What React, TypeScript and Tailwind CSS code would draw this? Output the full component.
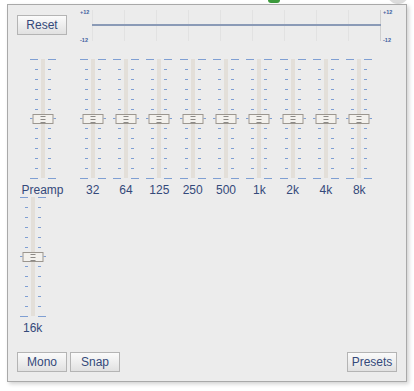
import React from "react"

const bands = ["32", "64", "125", "250", "500", "1k", "2k", "4k", "8k", "16k"]
const font = { fontFamily: '"Liberation Sans", Arial, sans-serif' }

const Button = (props: { label: string; className?: string }) => (
  <button
    className={
      "w-[50px] h-[20px] border border-[#b4b4b4] bg-gradient-to-b from-[#fbfbfb] to-[#e1e1e1] text-[12px] leading-none text-[#34497a] " +
      (props.className ?? "")
    }
  >
    {props.label}
  </button>
)

const Tick = (props: { major: boolean }) =>
  props.major ? (
    <div className="flex justify-center gap-[10px] h-px">
      <div className="w-[8px] h-px bg-[#7f9fd3]" />
      <div className="w-[8px] h-px bg-[#7f9fd3]" />
    </div>
  ) : (
    <div className="flex justify-center gap-[10px] h-px">
      <div className="w-[8px] h-px flex justify-end">
        <div className="w-[3px] h-px bg-[#7f9fd3]" />
      </div>
      <div className="w-[8px] h-px">
        <div className="w-[3px] h-px bg-[#7f9fd3]" />
      </div>
    </div>
  )

const Slider = (props: { label: string; className: string }) => (
  <div className={"flex flex-col items-center h-[138px] " + props.className}>
    <div className="relative w-full h-[120px] flex flex-col justify-between">
      <div className="absolute left-1/2 -translate-x-1/2 top-0 bottom-[1px] w-[4px] bg-[#e3dfd9]" />
      {Array.from({ length: 13 }).map((_, i) => (
        <Tick key={i} major={i % 6 === 0} />
      ))}
      <div className="absolute top-[55px] left-1/2 -translate-x-1/2 w-[21px] h-[10px] border border-[#9b968f] bg-[#f3f1ed] flex flex-col items-center justify-center gap-[2px]">
        <div className="w-[5px] h-px bg-[#8d8a86]" />
        <div className="w-[5px] h-px bg-[#8d8a86]" />
        <div className="w-[5px] h-px bg-[#8d8a86]" />
      </div>
    </div>
    <div className="mt-[4px] text-[12px] leading-[14px] text-[#34497a] whitespace-nowrap">{props.label}</div>
  </div>
)

export default function App() {
  return (
    <div className="relative w-[414px] h-[391px] bg-white overflow-hidden pl-[7px] pt-[4px]" style={font}>
      {/* bits of the page behind the popup */}
      <div className="absolute top-[-7px] left-[268px] w-[12px] h-[10px] rounded-[3px] bg-[#3c9a3c]" />
      <div className="absolute top-[-18px] left-[387px] w-[22px] h-[22px] rounded-full bg-[#dcdcdc]" />

      <div className="relative w-[400px] h-[378px] border border-[#a9a9a9] bg-[#ececec] shadow-[2px_2px_4px_rgba(0,0,0,0.18)] flex flex-col">
        <div className="flex items-start h-[54px]">
          <Button label="Reset" className="ml-[9px] mt-[10px] h-[19px]" />
          <div className="flex ml-[11px] mt-[4px]">
            <div className="w-[14px] h-[34px] flex flex-col justify-between pl-[2px] text-[5.5px] font-bold leading-[6px] text-[#3f5f9f]">
              <span>+12</span>
              <span>-12</span>
            </div>
            <div className="relative w-[289px] h-[31px] mt-[1px] flex justify-between">
              {Array.from({ length: 9 }).map((_, i) => (
                <div key={i} className="w-px h-full bg-[#e2e2e2]" />
              ))}
              <div className="w-px h-full bg-[#cfcfcf]" />
              <div className="absolute left-0 right-0 top-[14px] h-[2px] bg-[#8a9ab6]" />
            </div>
            <div className="h-[34px] flex flex-col justify-between ml-[2px] text-[5.5px] font-bold leading-[6px] text-[#3f5f9f]">
              <span>+12</span>
              <span>-12</span>
            </div>
          </div>
        </div>

        <div className="flex flex-wrap content-start pl-[8px] pr-[8px]">
          <Slider label="Preamp" className="w-[53px] mr-[7px]" />
          {bands.map((b) => (
            <Slider key={b} label={b} className="w-[33.33px]" />
          ))}
        </div>

        <div className="flex mt-auto px-[9px] pb-[9px]">
          <Button label="Mono" />
          <Button label="Snap" className="ml-[3px]" />
          <Button label="Presets" className="ml-auto" />
        </div>
      </div>
    </div>
  )
}
